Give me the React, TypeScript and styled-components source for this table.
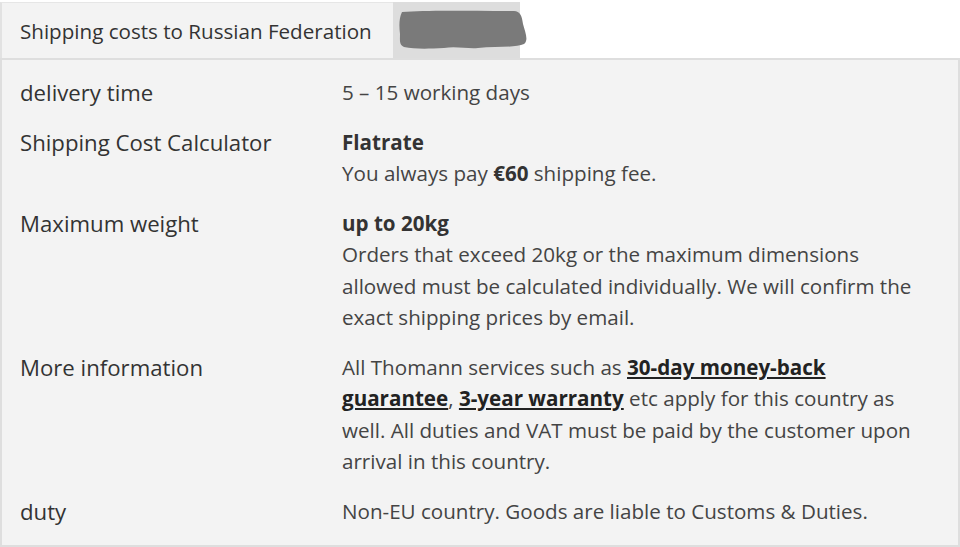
import React from "react";
import styled, { createGlobalStyle } from "styled-components";

const Global = createGlobalStyle`
  html, body { margin: 0; padding: 0; background: #ffffff; }
  body { font-family: "Open Sans", "Noto Sans", sans-serif; }
`;

const Wrap = styled.div`
  width: 960px;
  display: flex;
  flex-direction: column;
`;

const Tabs = styled.div`
  display: flex;
  align-items: stretch;
  height: 56px;
  padding-top: 2px;
`;

const Tab = styled.div<{ $active?: boolean }>`
  box-sizing: border-box;
  display: flex;
  align-items: center;
  position: relative;
  padding: 0 0 0 18px;
  font-size: 20.6px;
  color: #333333;
  background: ${(p) => (p.$active ? "#f3f3f3" : "#dddddd")};
  border-left: ${(p) => (p.$active ? "2px solid #e2e2e2" : "none")};
  border-top: ${(p) => (p.$active ? "1px solid #e6e6e6" : "none")};
  width: ${(p) => (p.$active ? "393px" : "127px")};
`;

const Blob = styled.svg`
  position: absolute;
  left: 3px;
  top: 6px;
  overflow: visible;
`;

const Panel = styled.div`
  box-sizing: border-box;
  background: #f3f3f3;
  border: 2px solid #dedede;
  padding: 8px 0 9px 18px;
  display: grid;
  grid-template-columns: 322px 1fr;
`;

const Label = styled.div`
  font-size: 22.2px;
  line-height: 31.5px;
  color: #333333;
  padding: 9px 0;
`;

const Value = styled.div`
  font-size: 20.6px;
  line-height: 31.5px;
  color: #444444;
  padding: 9px 28px 9px 0;
`;

const Strong = styled.b`
  font-weight: 700;
  color: #333333;
`;

const Link = styled.a`
  font-weight: 700;
  color: #222222;
  text-decoration: underline;
`;

export default function App() {
  return (
    <Wrap>
      <Global />
      <Tabs>
        <Tab $active>Shipping costs to Russian Federation</Tab>
        <Tab>
          <Blob width="130" height="42" viewBox="0 0 130 42">
            <path
              d="M6 4 C30 2 70 3 118 3 C124 3 126 8 127 16 C129 24 133 32 128 36 C120 40 100 38 82 40 C72 41 60 38 48 40 C30 41 18 41 8 39 C3 37 4 32 4 26 C3 18 3 10 6 4 Z"
              fill="#7a7a7a"
            />
          </Blob>
        </Tab>
      </Tabs>
      <Panel>
        <Label>delivery time</Label>
        <Value>5 – 15 working days</Value>

        <Label>Shipping Cost Calculator</Label>
        <Value>
          <Strong>Flatrate</Strong>
          <br />
          You always pay <Strong>€60</Strong> shipping fee.
        </Value>

        <Label>Maximum weight</Label>
        <Value>
          <Strong>up to 20kg</Strong>
          <br />
          Orders that exceed 20kg or the maximum dimensions allowed must be calculated individually. We will confirm the exact shipping prices by email.
        </Value>

        <Label>More information</Label>
        <Value>
          All Thomann services such as <Link href="#">30-day money-back guarantee</Link>, <Link href="#">3-year warranty</Link> etc apply for this country as well. All duties and VAT must be paid by the customer upon arrival in this country.
        </Value>

        <Label>duty</Label>
        <Value>Non-EU country. Goods are liable to Customs &amp; Duties.</Value>
      </Panel>
    </Wrap>
  );
}
